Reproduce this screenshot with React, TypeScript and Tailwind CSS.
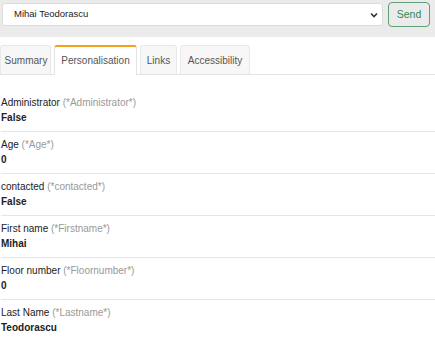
import React from "react";

const rows = [
  { label: "Administrator", key: "Administrator", value: "False" },
  { label: "Age", key: "Age", value: "0" },
  { label: "contacted", key: "contacted", value: "False" },
  { label: "First name", key: "Firstname", value: "Mihai" },
  { label: "Floor number", key: "Floornumber", value: "0" },
  { label: "Last Name", key: "Lastname", value: "Teodorascu" },
];

export default function App() {
  return (
    <div
      className="w-[435px] h-[338px] overflow-hidden bg-white text-[#222] text-[10px]"
      style={{ fontFamily: '"Liberation Sans", Arial, sans-serif' }}
    >
      <div className="h-[37px] bg-[#ebebeb] flex items-start pt-[2px] pl-[2px] pr-[5px] gap-[5px]">
        <div className="relative mt-[1px] w-[381px] h-[23px] bg-white border border-[#dcdcdc] rounded-[3px] flex items-center pl-[11px] text-[9.5px]">
          <span>Mihai Teodorascu</span>
          <svg
            className="absolute right-[4px] top-[8px]"
            width="8"
            height="6"
            viewBox="0 0 8 6"
          >
            <path d="M1 1.5 L4 4.5 L7 1.5" stroke="#333" strokeWidth="1.6" fill="none" />
          </svg>
        </div>
        <button className="w-[42px] h-[25px] rounded-[4px] border border-[#5f9e77] text-[#2f8a55] text-[10.5px] bg-[#ebebeb] flex items-center justify-center">
          Send
        </button>
      </div>
      <div className="mt-[8px] flex items-end border-b border-[#e3e3e3] h-[30px] gap-[3px] text-[10px] text-[#555]">
        <div className="h-[29px] w-[51px] bg-[#f7f7f7] border border-b-0 border-[#e8e8e8] rounded-t-[3px] flex items-center justify-center pl-[1px]">
          Summary
        </div>
        <div className="h-[30px] w-[83px] bg-white border-x border-t-2 border-x-[#e3e3e3] border-t-[#f5a11c] rounded-t-[3px] flex items-center justify-center mb-[-1px] pb-[1px]">
          Personalisation
        </div>
        <div className="h-[29px] w-[37px] bg-[#f7f7f7] border border-b-0 border-[#e8e8e8] rounded-t-[3px] flex items-center justify-center">
          Links
        </div>
        <div className="h-[29px] w-[70px] bg-[#f7f7f7] border border-b-0 border-[#e8e8e8] rounded-t-[3px] flex items-center justify-center">
          Accessibility
        </div>
      </div>
      <div className="pt-[15px] pl-[1px]">
        {rows.map((r, i) => (
          <div
            key={r.key}
            className={
              "pt-[5px] pb-[6px] leading-[15px] " +
              (i < rows.length - 1 ? "border-b border-[#e6e6e6]" : "")
            }
          >
            <div>
              {r.label} <span className="text-[#999]">(*{r.key}*)</span>
            </div>
            <div className="font-bold">{r.value}</div>
          </div>
        ))}
      </div>
    </div>
  );
}
